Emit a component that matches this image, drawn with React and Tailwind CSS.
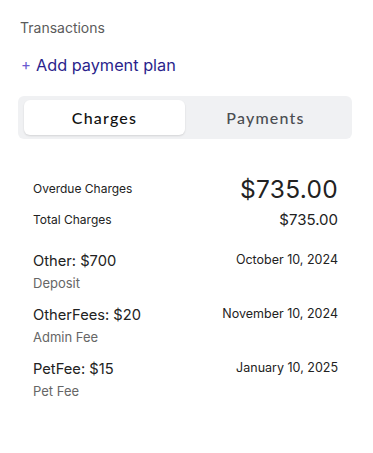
import React from "react";

const rows = [
  { title: "Other: $700", sub: "Deposit", date: "October 10, 2024" },
  { title: "OtherFees: $20", sub: "Admin Fee", date: "November 10, 2024" },
  { title: "PetFee: $15", sub: "Pet Fee", date: "January 10, 2025" },
];

export default function App() {
  return (
    <div className="w-[373px] h-[453px] bg-white font-['Inter',sans-serif] text-[#222]">
      <div className="pt-[19px] pl-[20px] text-[14px] leading-[18px] text-[#5b5b5b]">Transactions</div>
      <div className="mt-[18px] pl-[21px] flex items-center text-[16.3px] leading-[20px] text-[#2a1f8c]">
        <span className="text-[#6a5bd0] mr-[5px] text-[15px]">+</span>
        <span>Add payment plan</span>
      </div>
      <div className="mt-[21px] ml-[18px] w-[334px] h-[43px] rounded-[6px] bg-[#f0f1f3] px-[6px] py-[4px] grid grid-cols-2 font-['Lato',sans-serif]">
        <div className="bg-white rounded-[6px] shadow-[0_1px_2px_rgba(0,0,0,0.12)] flex items-center justify-center text-[16px] font-medium tracking-[1.2px] text-[#111]">
          Charges
        </div>
        <div className="flex items-center justify-center text-[16px] font-medium tracking-[1.2px] text-[#4a4d52]">
          Payments
        </div>
      </div>
      <div className="pl-[33px] pr-[35px] pt-[35px]">
        <div className="flex items-center justify-between h-[30px]">
          <span className="text-[12px]">Overdue Charges</span>
          <span className="text-[24.5px] tracking-[0.3px]">$735.00</span>
        </div>
        <div className="flex items-center justify-between h-[20px] mt-[6px]">
          <span className="text-[12px]">Total Charges</span>
          <span className="text-[15px]">$735.00</span>
        </div>
        <div className="mt-[21px] flex flex-col gap-[14px]">
          {rows.map((r) => (
            <div key={r.title}>
              <div className="flex items-center justify-between h-[20px]">
                <span className="text-[14.7px]">{r.title}</span>
                <span className="text-[12.5px] -mt-[2px]">{r.date}</span>
              </div>
              <div className="mt-[4px] text-[13px] leading-[16px] text-[#666]">{r.sub}</div>
            </div>
          ))}
        </div>
      </div>
    </div>
  );
}
